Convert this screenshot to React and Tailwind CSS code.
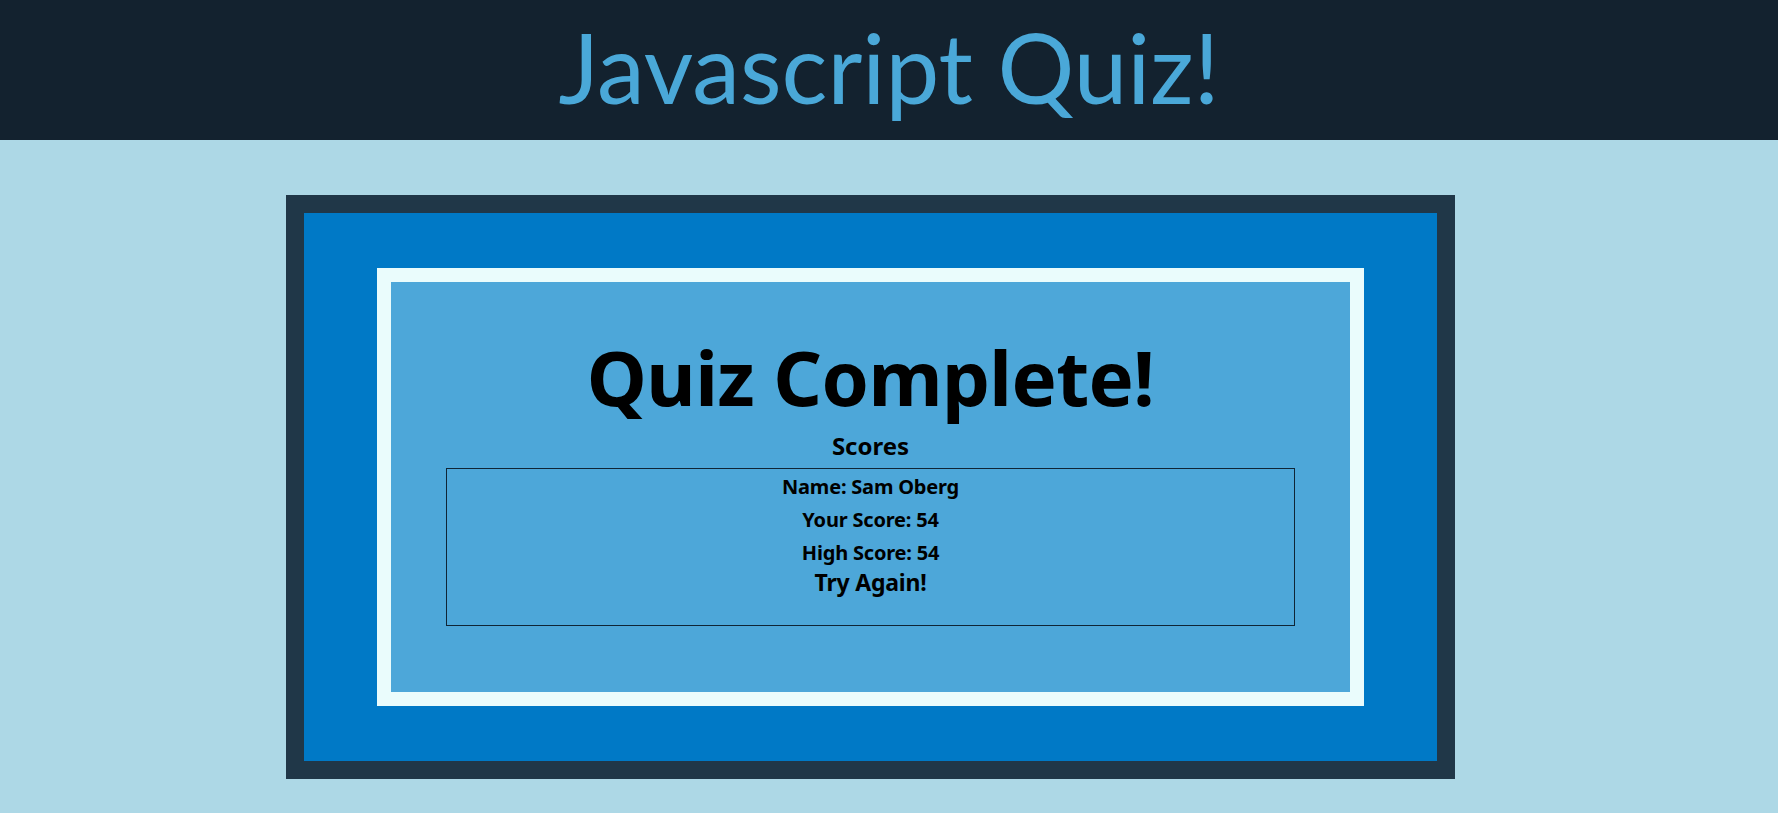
import React from "react";

export default function App() {
  return (
    <div className="min-h-[813px] w-full bg-[#add8e6] font-['Noto_Sans',sans-serif]">
      <header className="flex h-[140px] items-start justify-center bg-[#13222f]">
        <h1 className="mt-[19px] font-['Lato',sans-serif] text-[96px] font-normal leading-[96px] tracking-[0px] text-[#4aa8d8]">
          Javascript Quiz!
        </h1>
      </header>
      <div className="pt-[55px]">
        <div className="ml-[286px] w-[1169px] border-[18px] border-[#203748] bg-[#0079c6] px-[73px] py-[55px]">
          <div className="h-[438px] border-[14px] border-[#eafcfc] bg-[#4da7d9]">
            <div className="flex flex-col items-center">
              <h2 className="mt-[57px] text-[76px] font-bold leading-[76px] tracking-[-0.6px] text-black">
                Quiz Complete!
              </h2>
              <h3 className="mt-[19px] text-[24px] font-bold leading-[24px] tracking-[0px] text-black">
                Scores
              </h3>
              <div className="mt-[10px] flex w-[849px] flex-col items-center border border-[#0f2536] pt-[1px] pb-[31px]">
                <p className="text-[20px] font-bold leading-[33px] tracking-[-0.2px] text-black">Name: Sam Oberg</p>
                <p className="text-[20px] font-bold leading-[33px] tracking-[-0.2px] text-black">Your Score: 54</p>
                <p className="text-[20px] font-bold leading-[33px] tracking-[-0.2px] text-black">High Score: 54</p>
                <button className="mt-[2px] cursor-pointer text-[23px] font-bold leading-[23px] tracking-[-0.2px] text-black">
                  Try Again!
                </button>
              </div>
            </div>
          </div>
        </div>
      </div>
    </div>
  );
}
